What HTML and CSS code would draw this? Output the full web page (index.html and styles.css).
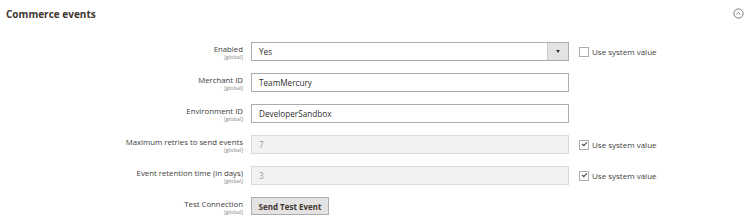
FILE: index.html
```html
<!DOCTYPE html>
<html lang="en">
<head>
    <meta charset="UTF-8">
    <title>Commerce events</title>
    <link rel="stylesheet" href="styles.css">
</head>
<body>
    <div class="section-head">
        <h2>Commerce events</h2>
        <span class="toggle">
            <svg width="11" height="11" viewBox="0 0 11 11">
                <circle cx="5.5" cy="5.5" r="4.6" fill="none" stroke="#6e6e6e" stroke-width="0.9"/>
                <path d="M3.6 6.4 L5.5 4.6 L7.4 6.4" fill="none" stroke="#6e6e6e" stroke-width="0.9"/>
            </svg>
        </span>
    </div>

    <div class="fieldset">
        <div class="row">
            <div class="label">Enabled<span class="scope">[global]</span></div>
            <div class="control">
                <div class="select">
                    <span class="value">Yes</span>
                    <span class="arrow"></span>
                </div>
            </div>
            <label class="use-default"><span class="check"></span>Use system value</label>
        </div>

        <div class="row">
            <div class="label">Merchant ID<span class="scope">[global]</span></div>
            <div class="control"><div class="input">TeamMercury</div></div>
        </div>

        <div class="row">
            <div class="label">Environment ID<span class="scope">[global]</span></div>
            <div class="control"><div class="input">DeveloperSandbox</div></div>
        </div>

        <div class="row">
            <div class="label">Maximum retries to send events<span class="scope">[global]</span></div>
            <div class="control"><div class="input disabled">7</div></div>
            <label class="use-default"><span class="check checked"></span>Use system value</label>
        </div>

        <div class="row">
            <div class="label">Event retention time (in days)<span class="scope">[global]</span></div>
            <div class="control"><div class="input disabled">3</div></div>
            <label class="use-default"><span class="check checked"></span>Use system value</label>
        </div>

        <div class="row">
            <div class="label">Test Connection<span class="scope">[global]</span></div>
            <div class="control"><button class="btn">Send Test Event</button></div>
        </div>
    </div>
</body>
</html>
```

FILE: styles.css
```css
body {
    margin: 0;
    background-color: #fff;
    font-family: "Open Sans", "Liberation Sans", sans-serif;
    color: #303030;
    font-size: 8px;
}
.section-head {
    display: flex;
    justify-content: space-between;
    align-items: center;
    height: 27px;
    padding: 0 6px 0 6px;
}
.section-head h2 {
    margin: 0;
    font-size: 10px;
    font-weight: 700;
    color: #41362f;
}
.toggle {
    display: flex;
}
.fieldset {
    padding-top: 15px;
}
.row {
    display: flex;
    align-items: flex-start;
    height: 19px;
    margin-bottom: 12px;
}
.label {
    width: 243px;
    text-align: right;
    line-height: 10px;
    padding-top: 2px;
    font-size: 7.8px;
    color: #3d3d3d;
}
.scope {
    display: block;
    font-size: 5.5px;
    line-height: 7px;
    color: #8a8a8a;
}
.control {
    width: 318px;
    margin-left: 8px;
}
.select, .input {
    box-sizing: border-box;
    height: 19px;
    border: 1px solid #adadad;
    background-color: #fff;
    display: flex;
    align-items: center;
    padding-left: 7px;
    font-size: 8.2px;
    color: #303030;
}
.select {
    justify-content: space-between;
    padding-right: 0;
}
.arrow {
    width: 20px;
    height: 17px;
    background-color: #e3e3e3;
    border-left: 1px solid #c8c8c8;
    position: relative;
}
.arrow::after {
    content: "";
    position: absolute;
    left: 8px;
    top: 7px;
    border-left: 2px solid transparent;
    border-right: 2px solid transparent;
    border-top: 3px solid #41362f;
}
.input.disabled {
    background-color: #f2f2f2;
    border-color: #dadada;
    color: #999;
}
.use-default {
    display: flex;
    align-items: center;
    margin-left: 10px;
    height: 19px;
    font-size: 8px;
    color: #3d3d3d;
}
.check {
    box-sizing: border-box;
    width: 10px;
    height: 10px;
    border: 1px solid #adadad;
    background-color: #fff;
    margin-right: 3px;
    position: relative;
}
.check.checked::after {
    content: "";
    position: absolute;
    left: 2px;
    top: 1px;
    width: 4px;
    height: 2px;
    border-left: 1.3px solid #41362f;
    border-bottom: 1.3px solid #41362f;
    transform: rotate(-45deg);
}
.btn {
    height: 18px;
    width: 78px;
    padding: 0;
    border: 1px solid #adadad;
    background-color: #e3e3e3;
    color: #41362f;
    font-family: "Open Sans", "Liberation Sans", sans-serif;
    font-weight: 700;
    font-size: 8px;
}
```
